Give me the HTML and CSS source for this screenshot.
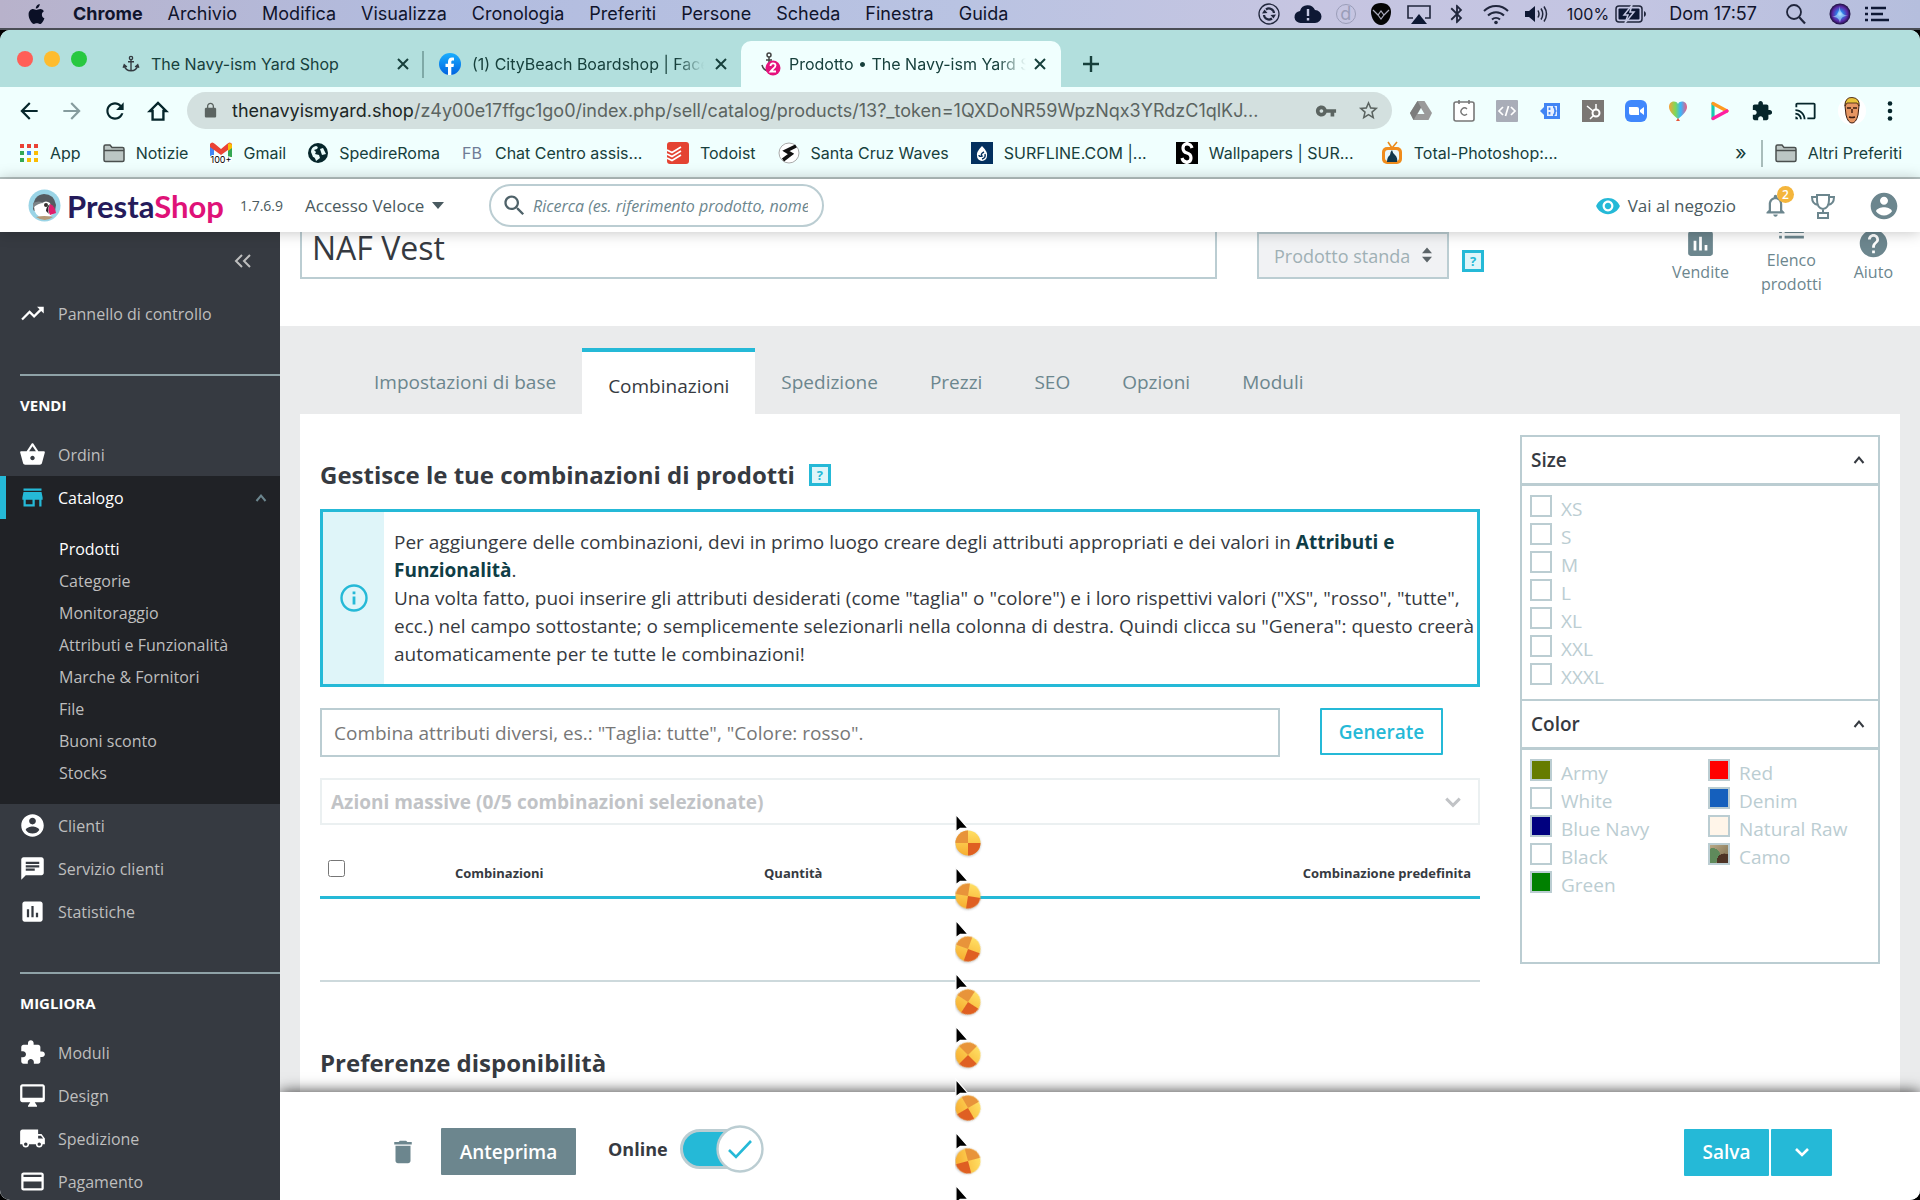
FILE: index.html
```html
<!DOCTYPE html>
<html lang="it">
<head>
<meta charset="utf-8">
<title>Prodotto • The Navy-ism Yard Shop</title>
<link rel="stylesheet" href="styles.css">
</head>
<body>
<svg class="defs" aria-hidden="true">
  <defs>
    <linearGradient id="ballLight" x1="0" y1="0" x2="0" y2="1"><stop offset="0" stop-color="#ffdf63"/><stop offset="1" stop-color="#f7ae30"/></linearGradient>
    <linearGradient id="fbBlue" x1="0" y1="0" x2="0" y2="1"><stop offset="0" stop-color="#19aefe"/><stop offset="1" stop-color="#0163e0"/></linearGradient>
    <radialGradient id="siri"><stop offset="0" stop-color="#bfe6ff"/><stop offset=".3" stop-color="#2d7fe8"/><stop offset=".7" stop-color="#5b2aa8"/><stop offset="1" stop-color="#1b0f3c"/></radialGradient>
    <linearGradient id="rainbow" x1="0" y1="0" x2="1" y2="0"><stop offset="0" stop-color="#f9a13a"/><stop offset=".35" stop-color="#7ed957"/><stop offset=".65" stop-color="#38b6ff"/><stop offset="1" stop-color="#f05a7e"/></linearGradient>
  </defs>
  <symbol id="i-anchor" viewBox="0 0 24 24"><g fill="none" stroke="#333a40" stroke-width="1.800"><circle cx="12" cy="4" r="2.200"/><path d="M12 6v15M8 9h8M3 14c1 5 5 7 9 7s8-2 9-7M1.500 17l1.500-4 3.500 3M22.500 17l-1.500-4-3.500 3"/></g></symbol>
  <symbol id="i-x" viewBox="0 0 12 12"><path d="M1 1l10 10M11 1L1 11" stroke="currentColor" stroke-width="2" fill="none"/></symbol>
  <symbol id="i-folder" viewBox="0 0 22 20"><path d="M1 17V3.500C1 2.500 1.500 2 2.500 2H7l2 2.500h10.500c1 0 1.500.5 1.500 1.500V17c0 1-.5 1.500-1.500 1.500h-17C1.500 18.500 1 18 1 17z" fill="#bcc6c4" stroke="#4a4f4e" stroke-width="1.500"/><path d="M1 7.500h20" stroke="#4a4f4e" stroke-width="1.300"/></symbol>
  <symbol id="i-user" viewBox="0 0 24 24"><path d="M12 2C6.480 2 2 6.480 2 12s4.480 10 10 10 10-4.480 10-10S17.520 2 12 2zm0 3c1.660 0 3 1.340 3 3s-1.340 3-3 3-3-1.340-3-3 1.340-3 3-3zm0 14.200c-2.500 0-4.710-1.280-6-3.220.03-1.990 4-3.080 6-3.080 1.990 0 5.970 1.090 6 3.080-1.290 1.940-3.500 3.220-6 3.220z"/></symbol>
  <symbol id="i-stats" viewBox="0 0 24 24"><path d="M19 3H5c-1.100 0-2 .9-2 2v14c0 1.100.9 2 2 2h14c1.100 0 2-.9 2-2V5c0-1.100-.9-2-2-2zM9 17H7v-7h2v7zm4 0h-2V7h2v10zm4 0h-2v-4h2v4z"/></symbol>
  <symbol id="i-puzzle" viewBox="0 0 24 24"><path d="M20.500 11H19V7c0-1.100-.9-2-2-2h-4V3.500C13 2.120 11.880 1 10.500 1S8 2.120 8 3.500V5H4c-1.100 0-1.990.9-1.990 2v3.800H3.500c1.490 0 2.700 1.210 2.700 2.700s-1.210 2.700-2.700 2.700H2V20c0 1.100.9 2 2 2h3.800v-1.500c0-1.490 1.210-2.700 2.700-2.700 1.490 0 2.700 1.210 2.700 2.700V22H17c1.100 0 2-.9 2-2v-4h1.500c1.380 0 2.500-1.120 2.500-2.500S21.880 11 20.500 11z"/></symbol>
  <symbol id="i-search" viewBox="0 0 24 24"><path d="M15.500 14h-.79l-.28-.27C15.410 12.590 16 11.110 16 9.500 16 5.910 13.090 3 9.500 3S3 5.910 3 9.500 5.910 16 9.500 16c1.610 0 3.090-.59 4.230-1.570l.27.28v.79l5 4.990L20.490 19l-4.990-5zm-6 0C7.010 14 5 11.990 5 9.500S7.010 5 9.500 5 14 7.010 14 9.500 11.990 14 9.500 14z"/></symbol>
  <symbol id="i-up" viewBox="0 0 12 12"><path d="M1.500 9L6 3.500 10.500 9" fill="none" stroke="currentColor" stroke-width="2"/></symbol>
  <symbol id="i-down" viewBox="0 0 16 12"><path d="M2 3l6 6 6-6" fill="none" stroke="currentColor" stroke-width="2.600"/></symbol>
  <symbol id="i-arrow" viewBox="0 0 16 24"><path d="M1 1v20l5-4h9z" fill="#000" stroke="#fff" stroke-width="1.500"/></symbol>
  <symbol id="i-ball" viewBox="0 0 26 26"><circle cx="13" cy="13" r="12.500" fill="url(#ballLight)"/><path d="M13 13L.5 13A12.500 12.500 0 0 1 13 .5z" fill="#e8943a"/><path d="M13 13h12.500A12.500 12.500 0 0 1 13 25.500z" fill="#df5f22"/></symbol>
</svg>

<header class="menubar">
  <nav class="menus" aria-label="Menu">
    <svg class="apple" viewBox="0 0 17 21"><path fill="#0b1026" d="M11.700 0c.1 1.200-.4 2.400-1.100 3.200-.7.900-1.800 1.500-2.800 1.400-.1-1.100.4-2.300 1.100-3.100C9.600.7 10.800.1 11.700 0zM15.900 7.300c-1.300.8-2 1.900-2 3.400 0 1.700 1 3 2.500 3.600-.4 1.300-1 2.500-1.800 3.600-.8 1.100-1.600 2.100-2.800 2.100-1.100 0-1.500-.7-2.900-.7s-1.900.7-3 .7c-1.200 0-2.100-1.100-2.900-2.300C1.400 15.400.5 12.700.6 10.300c.1-3.100 2.100-5.200 4.400-5.200 1.400 0 2.500.9 3.400.9.800 0 2.200-1 3.900-1 1.400.1 2.700.7 3.600 2.300z"/></svg>
    <b>Chrome</b><span>Archivio</span><span>Modifica</span><span>Visualizza</span><span>Cronologia</span><span>Preferiti</span><span>Persone</span><span>Scheda</span><span>Finestra</span><span>Guida</span>
  </nav>
  <div class="status">
    <svg width="22" height="22" viewBox="0 0 22 22"><circle cx="11" cy="11" r="10" fill="none" stroke="#20263c" stroke-width="1.300"/><path d="M6 12a5 5 0 0 0 8 3.500M16 10a5 5 0 0 0-8-3.500" fill="none" stroke="#20263c" stroke-width="2.200"/><path d="M4 10.500l2.500-4 3 3.500zM18 11.500l-2.500 4-3-3.500z" fill="#20263c"/></svg>
    <svg width="28" height="22" viewBox="0 0 28 22"><path d="M7 20a6 6 0 0 1-1-12A8 8 0 0 1 21 7a6.500 6.500 0 0 1 0 13z" fill="#0e1834"/><path d="M14 6v7M14 15v2.500" stroke="#c5c8e2" stroke-width="2.400"/></svg>
    <span class="ring">d</span>
    <svg width="22" height="22" viewBox="0 0 22 22"><path d="M11 0C4 0 1 4 1 9c0 6 4 13 10 13s10-7 10-13c0-5-3-9-10-9z" fill="#050505"/><path d="M3 7l5 5 3-4 3 4 5-5M8 12l3 4 3-4" fill="none" stroke="#aab" stroke-width="1.200"/></svg>
    <svg width="26" height="22" viewBox="0 0 26 22"><path d="M7 15H2V3h22v12h-5" fill="none" stroke="#20263c" stroke-width="1.600"/><path d="M13 11l8 10H5z" fill="#0e1834"/></svg>
    <svg width="22" height="24" viewBox="0 0 24 24"><path fill="#20263c" d="M17.710 7.710L12 2h-1v7.590L6.410 5 5 6.410 10.590 12 5 17.590 6.410 19 11 14.410V22h1l5.710-5.710-4.300-4.290 4.300-4.290zM13 5.830l1.880 1.880L13 9.590V5.830zm1.880 10.460L13 18.170v-3.760l1.880 1.880z"/></svg>
    <svg width="28" height="22" viewBox="0 0 28 22"><g fill="none" stroke="#20263c" stroke-width="2"><path d="M2 8a17 17 0 0 1 24 0M6 12.500a11.500 11.500 0 0 1 16 0M10 16.500a6 6 0 0 1 8 0"/></g><circle cx="14" cy="19.500" r="1.800" fill="#20263c"/></svg>
    <svg width="24" height="20" viewBox="0 0 24 20"><path d="M1 7h4l6-5v16l-6-5H1z" fill="#0e1834"/><path d="M14 6.500q2 3.500 0 7M17 4.500q3.500 5.500 0 11M20 2.500q5 7.500 0 15" fill="none" stroke="#20263c" stroke-width="1.500"/></svg>
    <span class="pct">100%</span>
    <svg width="32" height="18" viewBox="0 0 32 18"><rect x="1" y="1" width="26" height="16" rx="3" fill="none" stroke="#20263c" stroke-width="1.500"/><rect x="3.500" y="3.500" width="21" height="11" rx="1" fill="#0e1834"/><path d="M29 6v6q2-1 2-3t-2-3z" fill="#20263c"/><path d="M17 0l-8 10h4l-3 8 9-11h-4z" fill="#0e1834" stroke="#c5c8e2" stroke-width="1.500"/></svg>
    <span class="clock">Dom 17:57</span>
    <svg class="find" width="22" height="22" viewBox="0 0 22 22"><circle cx="9" cy="9" r="7" fill="none" stroke="#20263c" stroke-width="1.800"/><path d="M14 14l6 6.500" stroke="#20263c" stroke-width="2.200"/></svg>
    <svg width="22" height="22" viewBox="0 0 22 22"><circle cx="11" cy="11" r="10.500" fill="url(#siri)"/><path d="M3 14c5-1 7-4 7.500-11 .5 6 3 9 8.500 10-5 0-7 1-8 7-1-5-3-6-8-6z" fill="#b7e6ff" opacity=".6"/></svg>
    <svg width="24" height="18" viewBox="0 0 24 18"><path d="M0 3h3M0 9h3M0 15h3M6 3h15M6 9h12M6 15h18" stroke="#0e1834" stroke-width="2.600"/></svg>
  </div>
</header>

<div class="window">
  <div class="tabstrip">
    <div class="lights"><i class="red"></i><i class="amber"></i><i class="green"></i></div>
    <div class="tab first">
      <svg width="18" height="20"><use href="#i-anchor"/></svg>
      <span class="tab-title">The Navy-ism Yard Shop</span>
      <button aria-label="Chiudi scheda"><svg width="12" height="12"><use href="#i-x"/></svg></button>
    </div>
    <div class="tab second">
      <svg width="22" height="22" viewBox="0 0 22 22"><circle cx="11" cy="11" r="11" fill="url(#fbBlue)"/><path d="M9 22v-8H6.500v-3.200H9V8.700C9 6 10.600 4.500 13 4.500c1.100 0 2 .2 2 .2v2.700h-1.200c-1.200 0-1.500.7-1.500 1.500v1.900H15l-.5 3.200h-2.200v8z" fill="#fff"/></svg>
      <span class="tab-title fade">(1) CityBeach Boardshop | Facebook</span>
      <button aria-label="Chiudi scheda"><svg width="12" height="12"><use href="#i-x"/></svg></button>
    </div>
    <div class="tab active">
      <svg width="20" height="24" viewBox="0 0 20 24"><g fill="none" stroke="#444" stroke-width="1.500"><circle cx="8" cy="3" r="2"/><path d="M8 5v13M5 8h6M1 13c1 4 4 6 7 6"/></g><circle cx="12" cy="16" r="7.500" fill="#e5127d"/><path d="M9.500 14c0-3.500 5-3.500 5-.5 0 2-3 3.500-5 6h5.500" fill="none" stroke="#fff" stroke-width="1.800"/></svg>
      <span class="tab-title fade">Prodotto • The Navy-ism Yard Shop</span>
      <button aria-label="Chiudi scheda"><svg width="12" height="12"><use href="#i-x"/></svg></button>
    </div>
    <button class="newtab" aria-label="Nuova scheda"><svg width="18" height="18" viewBox="0 0 18 18"><path d="M9 1v16M1 9h16" stroke="currentColor" stroke-width="2.400"/></svg></button>
  </div>

  <div class="toolbar">
    <div class="navbtns">
      <button aria-label="Indietro"><svg width="26" height="26" viewBox="0 0 24 24"><path d="M20 11H7.830l5.590-5.590L12 4l-8 8 8 8 1.410-1.410L7.830 13H20v-2z"/></svg></button>
      <button class="dim" aria-label="Avanti"><svg width="26" height="26" viewBox="0 0 24 24"><path d="M4 11h12.170l-5.590-5.590L12 4l8 8-8 8-1.410-1.410L16.170 13H4v-2z"/></svg></button>
      <button aria-label="Ricarica"><svg width="26" height="26" viewBox="0 0 24 24"><path d="M17.650 6.350C16.200 4.900 14.210 4 12 4c-4.420 0-7.990 3.580-7.990 8s3.570 8 7.990 8c3.730 0 6.840-2.550 7.730-6h-2.080c-.82 2.330-3.040 4-5.650 4-3.310 0-6-2.690-6-6s2.690-6 6-6c1.660 0 3.140.69 4.220 1.780L13 11h7V4l-2.350 2.350z"/></svg></button>
      <button aria-label="Pagina iniziale"><svg width="26" height="26" viewBox="0 0 24 24"><path d="M7 20v-8H4.500L12 4.500l7.500 7.500H17v8z" fill="none" stroke="currentColor" stroke-width="2.200"/></svg></button>
    </div>
    <div class="omnibox">
      <svg width="17" height="17" viewBox="0 0 24 24"><path fill="#5b6461" d="M18 8h-1V6c0-2.760-2.240-5-5-5S7 3.240 7 6v2H6c-1.100 0-2 .9-2 2v10c0 1.100.9 2 2 2h12c1.100 0 2-.9 2-2V10c0-1.100-.9-2-2-2zM8.900 8V6c0-1.710 1.390-3.100 3.100-3.100s3.100 1.390 3.100 3.100v2z"/></svg>
      <span class="url"><span class="host">thenavyismyard.shop</span>/z4y00e17ffgc1go0/index.php/sell/catalog/products/13?_token=1QXDoNR59WpzNqx3YRdzC1qlKJ...</span>
      <svg width="22" height="22" viewBox="0 0 24 24"><path fill="#5b6461" d="M12.650 10C11.830 7.670 9.610 6 7 6c-3.310 0-6 2.690-6 6s2.690 6 6 6c2.610 0 4.830-1.670 5.650-4H17v4h4v-4h2v-4H12.650zM7 14c-1.100 0-2-.9-2-2s.9-2 2-2 2 .9 2 2-.9 2-2 2z"/></svg>
      <svg width="23" height="23" viewBox="0 0 24 24"><path fill="#5b6461" d="M22 9.240l-7.190-.62L12 2 9.190 8.630 2 9.240l5.460 4.730L5.820 21 12 17.270 18.180 21l-1.630-7.030L22 9.240zM12 15.400l-3.760 2.270 1-4.280-3.320-2.880 4.380-.38L12 6.100l1.710 4.040 4.380.38-3.320 2.880 1 4.280L12 15.400z"/></svg>
    </div>
    <div class="exts">
      <svg width="22" height="20" viewBox="0 0 22 20"><path d="M7.500 0h7L22 12l-3.500 7h-15L0 12z" fill="#9a9a9a"/><path d="M7.500 0L0 12l3.500 7L11 6.500z" fill="#7c7c7c"/><path d="M11 7l-3.500 6h7z" fill="#f0fffe"/></svg>
      <svg width="22" height="22" viewBox="0 0 22 22"><rect x="1" y="2" width="20" height="19" rx="2" fill="#fff" stroke="#777" stroke-width="1.600"/><path d="M6 0v4M16 0v4" stroke="#777" stroke-width="1.600"/><path d="M14 9a3.500 3.500 0 1 0 0 5" fill="none" stroke="#777" stroke-width="1.400"/></svg>
      <svg width="22" height="22" viewBox="0 0 22 22"><rect width="22" height="22" rx="1" fill="#a9adb8"/><path d="M7 7l-4 4 4 4M15 7l4 4-4 4M12.500 6l-3 10" fill="none" stroke="#fff" stroke-width="1.700"/></svg>
      <svg width="22" height="18" viewBox="0 0 22 18"><path d="M5 1h16v16H5v-4L1 9l4-4z" fill="#4285f4"/><path d="M8 4h10v10H8z" fill="#e8f0fe"/><path d="M10.500 5.500v2.500M10.500 10v2.500M14 5c3 0 1 3 2.500 4C15 10 17 13 14 13" fill="none" stroke="#4285f4" stroke-width="1.800"/></svg>
      <svg width="22" height="22" viewBox="0 0 22 22"><rect width="22" height="22" fill="#7b7774"/><g fill="none" stroke="#fff"><circle cx="14" cy="13" r="3.500" stroke-width="2"/><path d="M14 9V4M11 11L5 6M11.500 15.500L8 19" stroke-width="1.500"/></g></svg>
      <svg width="22" height="22" viewBox="0 0 22 22"><rect width="22" height="22" rx="6" fill="#4087fc"/><path d="M4 7h8q2 0 2 2v6H6q-2 0-2-2zM15 10l4-3v8l-4-3z" fill="#fff"/></svg>
      <svg width="20" height="22" viewBox="0 0 20 22"><path d="M10 19C5 15 1 11 1 7c0-6 7-7 9-3 2-4 9-3 9 3 0 4-4 8-9 12z" fill="url(#rainbow)"/><path d="M10 18l-2 3h4z" fill="#e8553a"/></svg>
      <svg width="20" height="20" viewBox="0 0 20 20"><g fill="none" stroke-width="3.200" stroke-linecap="round"><path d="M3 17.500V2.500" stroke="#19c8b0"/><path d="M3 2.500L17 10" stroke="#ff9a1f"/><path d="M17 10L3 17.500" stroke="#ff1fa0"/></g></svg>
      <svg class="ink" width="22" height="22"><use href="#i-puzzle"/></svg>
      <svg class="ink" width="23" height="22" viewBox="0 0 24 24"><path d="M21 3H3c-1.100 0-2 .9-2 2v3h2V5h18v14h-7v2h7c1.100 0 2-.9 2-2V5c0-1.100-.9-2-2-2zM1 18v3h3c0-1.660-1.340-3-3-3zm0-4v2c2.760 0 5 2.240 5 5h2c0-3.870-3.130-7-7-7zm0-4v2c4.970 0 9 4.030 9 9h2c0-6.080-4.930-11-11-11z"/></svg>
      <svg width="28" height="28" viewBox="0 0 28 28"><circle cx="14" cy="14" r="14" fill="#fff"/><path d="M7 9q0-8 7-8t7 8l-1 9q-2 8-6 8t-6-8z" fill="#e79663" stroke="#3b1c10"/><path d="M7 9q0-9 7-8.500Q22 1 21 9l-2-3H9z" fill="#e8c33a" stroke="#3b1c10" stroke-width=".8"/><path d="M9 11h4M15 11h4M14 12v4M11 20q3 1 6 0" stroke="#3b1c10" stroke-width="1.400" fill="none"/></svg>
      <svg class="ink" width="6" height="20" viewBox="0 0 6 20"><circle cx="3" cy="2.500" r="2.300"/><circle cx="3" cy="10" r="2.300"/><circle cx="3" cy="17.500" r="2.300"/></svg>
    </div>
  </div>

  <div class="bookmarks">
    <a href="#"><svg width="20" height="20" viewBox="0 0 20 20"><path fill="#ea4335" d="M1 1h4v4H1zM8 1h4v4H8zM15 1h4v4h-4z"/><path fill="#34a853" d="M1 8h4v4H1zM1 15h4v4H1z"/><path fill="#4285f4" d="M8 8h4v4H8z"/><path fill="#fbbc04" d="M15 8h4v4h-4zM8 15h4v4H8zM15 15h4v4h-4z"/></svg><span>App</span></a>
    <a href="#"><svg width="22" height="20"><use href="#i-folder"/></svg><span>Notizie</span></a>
    <a href="#"><svg width="22" height="22" viewBox="0 0 22 22"><path d="M0 2h4v13H0z" fill="#4285f4"/><path d="M18 2h4v13h-4z" fill="#34a853"/><path d="M0 2q2-3 5 0l6 5 6-5q3-3 5 0v3L11 13 0 5z" fill="#ea4335"/><path d="M18 2q3-2 4 1v3l-4 3z" fill="#fbbc04"/><text x="11" y="21" text-anchor="middle" font-family="Inter" font-size="9" fill="#000" stroke="#fff" stroke-width="2" paint-order="stroke">100+</text></svg><span>Gmail</span></a>
    <a href="#"><svg width="20" height="20" viewBox="0 0 20 20"><circle cx="10" cy="10" r="10" fill="#06262b"/><path d="M3 9q0-5 5-6 3 1 1 3l-3 1 2 2-1 2 4 1 1 3-4 3q-1-4-3-4zM12 6l3-1 3 6-4 1z" fill="#e9fbfa"/></svg><span>SpedireRoma</span></a>
    <a href="#"><span class="fb">FB</span><span class="cut">Chat Centro assis...</span></a>
    <a href="#"><svg width="22" height="22" viewBox="0 0 22 22"><rect width="22" height="22" rx="3" fill="#e44332"/><path d="M0 8l5 2.500L14 5M0 12l5 2.500L14 9M0 16l5 2.500L14 13" fill="none" stroke="#fff" stroke-width="1.600"/></svg><span>Todoist</span></a>
    <a href="#"><svg width="22" height="22" viewBox="0 0 22 22"><circle cx="11" cy="11" r="10" fill="#fff" stroke="#aaa"/><path d="M18 4L8 9l5 3-8 6" fill="none" stroke="#111" stroke-width="3.600"/></svg><span>Santa Cruz Waves</span></a>
    <a href="#"><svg width="22" height="22" viewBox="0 0 22 22"><path d="M0 0h22v22H0z" fill="#03305f"/><path d="M11 4q6 6 5 10a5 5 0 0 1-10 0q-1-4 5-10z" fill="#fff"/><path d="M13 10q-4 2-2 4-3 1-3-1M14 12q1 4-3 5" fill="none" stroke="#03305f" stroke-width="1.400"/></svg><span class="cut">SURFLINE.COM |...</span></a>
    <a href="#"><svg width="22" height="22" viewBox="0 0 22 22"><path d="M0 0h22v22H0z" fill="#000"/><path d="M16 6q-1-4-5-4t-4 4 4 5 4 5-4 4-5-4M11 0v3M11 19v3" fill="none" stroke="#fff" stroke-width="3.200"/></svg><span class="cut">Wallpapers | SUR...</span></a>
    <a href="#"><svg width="22" height="24" viewBox="0 0 22 24"><path d="M11 7L7 1M11 7l5-6" stroke="#e98a1a" stroke-width="1.600"/><rect x="1" y="6" width="20" height="17" rx="5" fill="#f08c1c"/><rect x="4" y="9" width="14" height="11" rx="3" fill="#e9f7fb"/><path d="M6 21q0-5 3-7 0-3 2-5 1 4 3 5 3 3 2 7z" fill="#12384c"/></svg><span class="cut">Total-Photoshop:...</span></a>
    <span class="more">»</span>
    <a class="others" href="#"><svg width="22" height="20"><use href="#i-folder"/></svg><span>Altri Preferiti</span></a>
  </div>

  <header class="ps-header">
    <a class="brand" href="#">
      <svg width="33" height="33" viewBox="0 0 33 33"><circle cx="16.500" cy="16.500" r="16" fill="#9ad4e6"/><path d="M5 20Q5 6 16 5q10 0 12 11l-1 6H6z" fill="#555b60"/><path d="M6 17q3-4 8-3 4-3 8 0l3 11q-4 4-10 4Q6 27 6 17z" fill="#fff"/><path d="M5 14q6-3 11 0-6 0-11 5z" fill="#7c8488"/><circle cx="18" cy="16" r="2" fill="#34302f"/><path d="M22 15q5 2 6 9l-6 2q-3-5 0-11z" fill="#df1f6d"/><path d="M22 15q-3 5-1 10l-3-3q0-4 4-7z" fill="#29242a"/><path d="M8 28q8-2 17 0-8 6-17 0z" fill="#b69a78"/></svg>
      <span class="wordmark">Presta<span>Shop</span></span>
    </a>
    <span class="version">1.7.6.9</span>
    <button class="quick">Accesso Veloce<i class="caret"></i></button>
    <label class="search"><svg width="27" height="27"><use href="#i-search"/></svg><input type="text" aria-label="Ricerca" placeholder="Ricerca (es. riferimento prodotto, nome cliente...)"></label>
    <div class="ps-right">
      <a class="shop" href="#"><svg width="26" height="26" viewBox="0 0 24 24"><path d="M12 4.500C7 4.500 2.730 7.610 1 12c1.730 4.390 6 7.500 11 7.500s9.270-3.110 11-7.500c-1.730-4.390-6-7.500-11-7.500zM12 17c-2.760 0-5-2.240-5-5s2.240-5 5-5 5 2.240 5 5-2.240 5-5 5zm0-8c-1.660 0-3 1.340-3 3s1.340 3 3 3 3-1.340 3-3-1.340-3-3-3z"/></svg>Vai al negozio</a>
      <button class="bell" aria-label="Notifiche"><svg width="27" height="27" viewBox="0 0 24 24"><path d="M12 22c1.100 0 2-.9 2-2h-4c0 1.100.9 2 2 2zm6-6v-5c0-3.070-1.640-5.640-4.500-6.320V4c0-.83-.67-1.500-1.500-1.500s-1.500.67-1.500 1.500v.68C7.630 5.360 6 7.920 6 11v5l-2 2v1h16v-1l-2-2zm-2 1H8v-6c0-2.480 1.510-4.500 4-4.500s4 2.020 4 4.500v6z"/></svg><span class="badge">2</span></button>
      <button aria-label="Premi"><svg width="26" height="26" viewBox="0 0 26 26"><g fill="none" stroke="#6c868e" stroke-width="2"><path d="M7 2h12v5q0 8-6 9-6-1-6-9zM7 4H2q0 7 6 8M19 4h5q0 7-6 8M13 16v4M8 20h10v5H8z"/></g></svg></button>
      <button class="account" aria-label="Profilo"><svg width="32" height="32"><use href="#i-user"/></svg></button>
    </div>
  </header>

  <div class="workspace">
    <nav class="sidebar" aria-label="Principale">
      <button class="collapse" aria-label="Riduci menu"><svg width="18" height="14" viewBox="0 0 18 14"><path d="M8 1L2 7l6 6M16 1l-6 6 6 6" fill="none" stroke="#bebebe" stroke-width="2"/></svg></button>
      <a class="item" href="#"><svg viewBox="0 0 24 24"><path d="M16 6l2.290 2.290-4.880 4.880-4-4L2 16.590 3.410 18l6-6 4 4 6.300-6.290L22 12V6z"/></svg>Pannello di controllo</a>
      <h2>VENDI</h2>
      <a class="item" href="#"><svg viewBox="0 0 24 24"><path d="M17.210 9l-4.380-6.560c-.19-.28-.51-.42-.83-.42-.32 0-.64.14-.83.43L6.790 9H2c-.55 0-1 .45-1 1 0 .09.01.18.04.27l2.540 9.270c.23.84 1 1.460 1.920 1.460h13c.92 0 1.690-.62 1.930-1.460l2.540-9.270L23 10c0-.55-.45-1-1-1h-4.790zM9 9l3-4.400L15 9H9zm3 8c-1.100 0-2-.9-2-2s.9-2 2-2 2 .9 2 2-.9 2-2 2z"/></svg>Ordini</a>
      <div class="open">
        <a class="item current" href="#"><svg viewBox="0 0 24 24"><path d="M20 4H4v2h16V4zm1 10v-2l-1-5H4l-1 5v2h1v6h10v-6h4v6h2v-6h1zm-9 4H6v-4h6v4z"/></svg>Catalogo<svg class="chev"><use href="#i-up"/></svg></a>
        <ul>
          <li><a class="on" href="#">Prodotti</a></li><li><a href="#">Categorie</a></li><li><a href="#">Monitoraggio</a></li><li><a href="#">Attributi e Funzionalità</a></li><li><a href="#">Marche &amp; Fornitori</a></li><li><a href="#">File</a></li><li><a href="#">Buoni sconto</a></li><li><a href="#">Stocks</a></li>
        </ul>
      </div>
      <a class="item" href="#"><svg><use href="#i-user"/></svg>Clienti</a>
      <a class="item" href="#"><svg viewBox="0 0 24 24"><path d="M20 2H4c-1.100 0-1.990.9-1.990 2L2 22l4-4h14c1.100 0 2-.9 2-2V4c0-1.100-.9-2-2-2zM6 9h12v2H6V9zm8 5H6v-2h8v2zm4-6H6V6h12v2z"/></svg>Servizio clienti</a>
      <a class="item" href="#"><svg><use href="#i-stats"/></svg>Statistiche</a>
      <h2>MIGLIORA</h2>
      <a class="item" href="#"><svg><use href="#i-puzzle"/></svg>Moduli</a>
      <a class="item" href="#"><svg viewBox="0 0 24 24"><path d="M21 2H3c-1.100 0-2 .9-2 2v12c0 1.100.9 2 2 2h7l-2 3v1h8v-1l-2-3h7c1.100 0 2-.9 2-2V4c0-1.100-.9-2-2-2zm0 12H3V4h18v10z"/></svg>Design</a>
      <a class="item" href="#"><svg viewBox="0 0 24 24"><path d="M20 8h-3V4H3c-1.100 0-2 .9-2 2v11h2c0 1.660 1.340 3 3 3s3-1.340 3-3h6c0 1.660 1.340 3 3 3s3-1.340 3-3h2v-5l-3-4zM6 18.500c-.83 0-1.500-.67-1.500-1.500s.67-1.500 1.500-1.500 1.500.67 1.500 1.500-.67 1.500-1.500 1.500zm13.500-9l1.960 2.500H17V9.500h2.500zm-1.500 9c-.83 0-1.500-.67-1.500-1.500s.67-1.500 1.500-1.500 1.500.67 1.500 1.500-.67 1.500-1.500 1.500z"/></svg>Spedizione</a>
      <a class="item" href="#"><svg viewBox="0 0 24 24"><path d="M20 4H4c-1.110 0-1.990.89-1.990 2L2 18c0 1.110.89 2 2 2h16c1.110 0 2-.89 2-2V6c0-1.110-.89-2-2-2zm0 14H4v-6h16v6zm0-10H4V6h16v2z"/></svg>Pagamento</a>
    </nav>

    <div class="main">
      <div class="content">
        <div class="product-head">
          <input class="name" aria-label="Nome prodotto" value="NAF Vest">
          <div class="type"><select disabled aria-label="Tipo di prodotto"><option>Prodotto standard</option></select><svg width="10" height="16" viewBox="0 0 12 18"><path d="M0 7l6-7 6 7zM0 11h12l-6 7z" fill="#5c6468"/></svg></div>
          <button class="help">?</button>
          <div class="actions">
            <a href="#"><svg width="33" height="33"><use href="#i-stats"/></svg>Vendite</a>
            <a class="two" href="#"><svg width="33" height="33" viewBox="0 0 24 24"><path d="M3 7h2v2H3zM7 7h14v2H7zM3 11h2v2H3zM7 11h14v2H7zM3 15h2v2H3zM7 15h14v2H7z"/></svg>Elenco<br>prodotti</a>
            <a href="#"><svg width="33" height="33" viewBox="0 0 24 24"><path d="M12 2C6.480 2 2 6.480 2 12s4.480 10 10 10 10-4.480 10-10S17.520 2 12 2zm1 17h-2v-2h2v2zm2.070-7.750l-.9.92C13.450 12.900 13 13.500 13 15h-2v-.5c0-1.100.45-2.100 1.170-2.830l1.240-1.260c.37-.36.59-.86.59-1.410 0-1.100-.9-2-2-2s-2 .9-2 2H8c0-2.210 1.790-4 4-4s4 1.790 4 4c0 .88-.36 1.680-.93 2.250z"/></svg>Aiuto</a>
          </div>
        </div>
        <nav class="tabs" aria-label="Sezioni prodotto">
          <a href="#">Impostazioni di base</a><a class="sel" href="#">Combinazioni</a><a href="#">Spedizione</a><a href="#">Prezzi</a><a href="#">SEO</a><a href="#">Opzioni</a><a href="#">Moduli</a>
        </nav>
        <div class="panel">
          <section class="combos">
            <h1>Gestisce le tue combinazioni di prodotti <button class="help">?</button></h1>
            <div class="info">
              <div class="info-icon"><svg width="28" height="28" viewBox="0 0 28 28"><circle cx="14" cy="14" r="12.500" fill="none" stroke="#25b9d7" stroke-width="2.400"/><path d="M14 7.500v2.800M14 12.500v8" stroke="#25b9d7" stroke-width="2.800"/></svg></div>
              <p>Per aggiungere delle combinazioni, devi in primo luogo creare degli attributi appropriati e dei valori in <a href="#">Attributi e<br>Funzionalità</a>.<br>Una volta fatto, puoi inserire gli attributi desiderati (come "taglia" o "colore") e i loro rispettivi valori ("XS", "rosso", "tutte",<br>ecc.) nel campo sottostante; o semplicemente selezionarli nella colonna di destra. Quindi clicca su "Genera": questo creerà<br>automaticamente per te tutte le combinazioni!</p>
            </div>
            <div class="generate">
              <input aria-label="Combina attributi" placeholder="Combina attributi diversi, es.: &quot;Taglia: tutte&quot;, &quot;Colore: rosso&quot;.">
              <div><button>Generate</button></div>
            </div>
            <button class="bulk" disabled>Azioni massive (0/5 combinazioni selezionate)<svg width="18" height="14"><use href="#i-down"/></svg></button>
            <table>
              <thead><tr><th class="c-check"><input type="checkbox" aria-label="Seleziona tutto"></th><th class="c-name">Combinazioni</th><th>Quantità</th><th class="c-def">Combinazione predefinita</th></tr></thead>
              <tbody><tr><td colspan="4"></td></tr></tbody>
            </table>
            <h1 class="prefs">Preferenze disponibilità</h1>
          </section>
          <aside class="attrs">
            <button class="group">Size<svg width="12" height="12"><use href="#i-up"/></svg></button>
            <div class="opts sizes">
              <label><input type="checkbox">XS</label><label><input type="checkbox">S</label><label><input type="checkbox">M</label><label><input type="checkbox">L</label><label><input type="checkbox">XL</label><label><input type="checkbox">XXL</label><label><input type="checkbox">XXXL</label>
            </div>
            <button class="group">Color<svg width="12" height="12"><use href="#i-up"/></svg></button>
            <div class="opts colors">
              <label><input type="checkbox" class="army">Army</label><label><input type="checkbox">White</label><label><input type="checkbox" class="navy">Blue Navy</label><label><input type="checkbox">Black</label><label><input type="checkbox" class="grn">Green</label><label><input type="checkbox" class="rd">Red</label><label><input type="checkbox" class="denim">Denim</label><label><input type="checkbox" class="raw">Natural Raw</label><label><input type="checkbox" class="camo">Camo</label>
            </div>
          </aside>
        </div>
      </div>
      <footer class="actionbar">
        <button class="trash" aria-label="Elimina"><svg width="30" height="30" viewBox="0 0 24 24"><path d="M6 19c0 1.100.9 2 2 2h8c1.100 0 2-.9 2-2V7H6v12zM19 4h-3.500l-1-1h-5l-1 1H5v2h14V4z"/></svg></button>
        <button class="preview">Anteprima</button>
        <label class="online">Online<span class="switch"><input type="checkbox" checked><svg width="48" height="48" viewBox="0 0 48 48"><circle cx="24" cy="24" r="22.500" fill="#fff" stroke="#bbcdd2" stroke-width="2.400"/><path d="M13 25l7 7 15-16" fill="none" stroke="#25b9d7" stroke-width="2.600"/></svg></span></label>
        <div class="save"><button>Salva</button><button class="drop" aria-label="Altre azioni"><svg width="16" height="12"><use href="#i-down"/></svg></button></div>
      </footer>
    </div>
  </div>
</div>

<div class="trail" aria-hidden="true">
  <div><svg class="ptr"><use href="#i-arrow"/></svg><svg class="ball"><use href="#i-ball"/></svg></div>
  <div><svg class="ptr"><use href="#i-arrow"/></svg><svg class="ball b1"><use href="#i-ball"/></svg></div>
  <div><svg class="ptr"><use href="#i-arrow"/></svg><svg class="ball b2"><use href="#i-ball"/></svg></div>
  <div><svg class="ptr"><use href="#i-arrow"/></svg><svg class="ball b3"><use href="#i-ball"/></svg></div>
  <div><svg class="ptr"><use href="#i-arrow"/></svg><svg class="ball b4"><use href="#i-ball"/></svg></div>
  <div><svg class="ptr"><use href="#i-arrow"/></svg><svg class="ball b5"><use href="#i-ball"/></svg></div>
  <div><svg class="ptr"><use href="#i-arrow"/></svg><svg class="ball b6"><use href="#i-ball"/></svg></div>
  <div><svg class="ptr"><use href="#i-arrow"/></svg></div>
</div>
</body>
</html>
```
FILE: styles.css
```css
*, *::before, *::after { box-sizing: border-box; }

body {
  margin: 0;
  height: 100vh;
  overflow: hidden;
  display: flex;
  flex-direction: column;
  background: #000;
  font-family: "Open Sans", "Noto Sans", sans-serif;
  font-size: 19px;
  color: #363a41;
}

button, input, select { font: inherit; color: inherit; }
button { border: 0; padding: 0; background: none; display: flex; align-items: center; justify-content: center; }
a { color: inherit; text-decoration: none; }
svg { flex: none; display: block; }
h1, h2, p, ul { margin: 0; padding: 0; }
.defs { position: absolute; width: 0; height: 0; }

/* macOS menu bar */
.menubar {
  flex: none;
  height: 30px;
  display: flex;
  justify-content: space-between;
  align-items: center;
  padding: 0 31px 0 28px;
  border-bottom: 2px solid #4a4d55;
  background: linear-gradient(90deg, #b8b2cb, #b2bcdf 22%, #b9c3e2 50%, #c6c5e1 68%, #c3c5e2 85%, #b5bedd);
  font: 18px/28px Inter, sans-serif;
  color: #10142c;
}
.menus { display: flex; align-items: center; gap: 25px; }
.menus b { font-weight: 700; }
.apple { width: 17px; height: 21px; margin-right: 3px; }
.status { display: flex; align-items: center; gap: 14px; }
.status .ring { width: 20px; height: 20px; border: 1px solid #9a9db8; border-radius: 50%; line-height: 17px; text-align: center; color: #9a9db8; }
.status .pct { font-size: 16px; margin: 0 -8px 0 5px; }
.status .clock { margin: 0 14px 0 8px; }
.status .find { margin-right: 8px; }

/* browser window */
.window {
  flex: 1;
  min-height: 0;
  display: flex;
  flex-direction: column;
  overflow: hidden;
  border-radius: 10px;
  background: #f0fffe;
  color: #17403c;
}
.tabstrip {
  flex: none;
  height: 57px;
  display: flex;
  align-items: flex-end;
  background: #b2dfdd;
  font: 16px/20px Inter, sans-serif;
}
.lights { display: flex; gap: 11px; padding: 0 0 20px 17px; width: 113px; }
.lights i { width: 16px; height: 16px; border-radius: 50%; }
.red { background: #ff5f57; }
.amber { background: #febc2e; }
.green { background: #28c840; }
.tab { height: 46px; display: flex; align-items: center; gap: 11px; }
.tab-title { flex: 1; min-width: 0; white-space: nowrap; overflow: hidden; }
.fade { -webkit-mask-image: linear-gradient(90deg, #000 88%, transparent); mask-image: linear-gradient(90deg, #000 88%, transparent); }
.tab.first { width: 311px; padding: 0 15px 0 9px; background: linear-gradient(#7fa9a7, #7fa9a7) right center / 2px 27px no-repeat; }
.tab.second { width: 317px; padding: 0 14px 0 15px; }
.tab.active { width: 320px; padding: 0 15px 0 20px; background: #f0fffe; border-radius: 10px 10px 0 0; gap: 8px; }
.newtab { height: 46px; margin-left: 21px; }

.toolbar { flex: none; height: 47px; display: flex; align-items: center; padding: 0 27px 0 16px; color: #06262b; }
.toolbar button svg, .ink { fill: #06262b; }
.navbtns { display: flex; gap: 17px; width: 171px; }
.navbtns .dim { opacity: .45; }
.omnibox { flex: 1; min-width: 0; height: 37px; border-radius: 19px; background: #d3e0df; display: flex; align-items: center; padding: 0 12px 0 15px; font: 18px/24px Inter, sans-serif; color: #5b6461; }
.url { flex: 1; min-width: 0; white-space: nowrap; overflow: hidden; margin: 0 16px 0 13px; }
.host { color: #1c2726; }
.omnibox svg + svg { margin-left: 20px; }
.exts { width: 483px; margin-left: 18px; display: flex; align-items: center; justify-content: space-between; }

.bookmarks { flex: none; height: 45px; display: flex; align-items: center; gap: 22px; padding: 0 18px 5px 19px; border-bottom: 2px solid #b9c6c5; font: 16px/20px Inter, sans-serif; }
.bookmarks a { display: flex; align-items: center; gap: 11px; white-space: nowrap; }
.bookmarks .cut { width: 150px; }
.fb { width: 22px; color: #6f7c96; }
.more { margin-left: auto; font-size: 20px; }
.bookmarks .others { border-left: 2px solid #a9bdbb; padding-left: 12px; height: 27px; margin-left: -8px; }

/* back-office header */
.ps-header { flex: none; height: 53px; display: flex; align-items: center; padding: 0 20px 0 28px; background: #fff; position: relative; z-index: 2; box-shadow: 0 0 14px rgba(0, 0, 0, .25); color: #4a5a60; font-size: 17px; }
.brand { display: flex; align-items: center; gap: 6px; width: 212px; }
.wordmark { font: 700 31px/36px Lato, sans-serif; color: #251b5b; }
.wordmark span { color: #df1278; }
.version { width: 65px; font-size: 14px; }
.quick { gap: 8px; width: 139px; justify-content: flex-start; white-space: nowrap; }
.caret { border: 6px solid transparent; border-top: 7px solid #4a5a60; border-bottom: 0; }
.search { margin-left: 45px; width: 335px; height: 43px; border: 2px solid #bbcdd2; border-radius: 22px; display: flex; align-items: center; padding: 0 14px 0 10px; gap: 5px; }
.search svg { fill: #4f6269; }
.search input { flex: 1; min-width: 0; border: 0; outline: 0; padding: 0; background: none; font-size: 16px; font-style: italic; }
.search input::placeholder { color: #6c868e; opacity: 1; }
.ps-right { margin-left: auto; display: flex; align-items: center; fill: #6c868e; }
.shop { display: flex; align-items: center; gap: 7px; white-space: nowrap; }
.shop svg { fill: #25b9d7; }
.bell { position: relative; margin: 0 21px 0 26px; }
.badge { position: absolute; left: 15px; top: -6px; width: 17px; height: 17px; border-radius: 50%; background: #f4b53c; color: #fff; font: 600 12px/17px "Open Sans", sans-serif; }
.account { margin-left: 32px; }

/* sidebar */
.workspace { flex: 1; min-height: 0; display: flex; background: #eaebec; color: #363a41; }
.sidebar { flex: none; width: 280px; overflow: hidden; background: #363a41; color: #bebebe; font-size: 16px; }
.collapse { width: 100%; height: 60px; justify-content: flex-end; padding: 0 28px 3px 0; }
.item { display: flex; align-items: center; height: 43px; padding-left: 19px; gap: 12px; }
.item svg { width: 27px; height: 27px; fill: #fff; }
.sidebar h2 { margin: 39px 0 0 20px; height: 59px; border-top: 2px solid #8fa2a7; padding-top: 18px; font: 700 15px/22px "Open Sans", sans-serif; color: #fff; }
.open { background: #202226; }
.current { color: #fff; border-left: 6px solid #25b9d7; padding: 0 13px 0 13px; }
.current svg { fill: #25b9d7; }
.current .chev { margin-left: auto; width: 12px; height: 12px; color: #6c868e; }
.sidebar ul { list-style: none; padding: 14px 0 15px 59px; }
.sidebar li { line-height: 32px; }
.on { color: #fff; }

/* product page */
.main { flex: 1; min-width: 0; display: flex; flex-direction: column; }
.content { flex: 1; min-height: 0; overflow: hidden; }
.product-head { height: 94px; padding: 0 20px 47px; background: #fff; display: flex; align-items: flex-end; }
.name { flex: 1; min-width: 0; height: 63px; padding: 0 10px; border: 2px solid #bbcdd2; background: #fff; font-size: 32px; outline: 0; }
.type { position: relative; flex: none; width: 192px; margin-left: 40px; }
.type select { appearance: none; display: block; width: 192px; height: 47px; padding: 0 36px 0 15px; border: 2px solid #bbcdd2; border-radius: 0; background: #f1f2f4; color: #9fb0b5; opacity: 1; font-size: 18px; }
.type svg { position: absolute; right: 17px; top: 15px; }
.help { flex: none; width: 22px; height: 22px; border: 3px solid #25b9d7; background: #dff5f9; color: #25b9d7; font: 700 13px/16px "Open Sans", sans-serif; }
.type + .help { margin: 0 0 7px 13px; }
.actions { flex: none; width: 416px; padding-right: 7px; display: flex; justify-content: flex-end; gap: 32px; align-items: flex-end; font-size: 16px; line-height: 24px; color: #6c868e; text-align: center; white-space: nowrap; height: 47px; }
.actions a { height: 52px; display: block; }
.actions .two { height: 64px; }
.actions svg { fill: #6c868e; margin: 0 auto; }
.tabs { height: 88px; padding: 22px 68px 0; display: flex; color: #6c868e; white-space: nowrap; }
.tabs a { padding: 21px 26px 0; line-height: 26px; }
.tabs .sel { background: #fff; border-top: 4px solid #25b9d7; color: #363a41; }
.panel { margin: 0 20px; padding: 21px 20px 0; background: #fff; display: grid; grid-template-columns: minmax(0, 1fr) 360px; gap: 40px; align-items: start; }
.combos h1 { display: flex; align-items: center; gap: 14px; margin: 24px 0 18px; font-size: 24px; line-height: 32px; }
.info { display: flex; border: 3px solid #25b9d7; white-space: nowrap; }
.info-icon { flex: none; width: 61px; background: #dff5f9; display: grid; place-items: center; }
.info p { padding: 16px 0 16px 10px; line-height: 28px; }
.info a { font-weight: 700; color: #0f3d46; }
.generate { display: flex; gap: 40px; margin-top: 21px; }
.generate input { flex: 1; height: 49px; padding: 0 12px; border: 2px solid #bbcdd2; background: #fff; }
.generate input::placeholder { color: #777; opacity: 1; }
.generate div { width: 160px; }
.generate button { width: 123px; height: 47px; border: 2px solid #25b9d7; border-radius: 1px; color: #25b9d7; font-weight: 600; }
.bulk { width: 100%; height: 47px; margin-top: 21px; padding: 0 16px 0 9px; border: 2px solid #ebf0f1; justify-content: space-between; font-weight: 700; color: #c1c3c6; }
table { width: 100%; margin-top: 25px; border-collapse: collapse; table-layout: fixed; border-bottom: 2px solid #cdd9dc; }
th { height: 47px; padding: 0; text-align: left; font-size: 13px; font-weight: 700; }
thead { border-bottom: 3px solid #25b9d7; }
.c-check { width: 135px; }
.c-check input { display: block; width: 17px; height: 17px; margin: -8px 0 0 8px; }
.c-name { width: 309px; }
.c-def { text-align: right; padding-right: 9px; }
td { height: 84px; padding: 0; }
.combos .prefs { margin: 65px 0 40px; }

.group { width: 100%; height: 50px; padding: 0 13px 0 9px; border: 2px solid #bbcdd2; justify-content: space-between; font-weight: 600; }
.opts { border: 2px solid #bbcdd2; border-width: 1px 2px 0; padding: 9px 0 0 8px; color: #bbcdd2; display: grid; grid-auto-rows: 28px; }
.opts label { display: flex; gap: 9px; line-height: 28px; white-space: nowrap; }
.opts input { appearance: none; flex: none; width: 22px; height: 22px; margin: 0; border: 2px solid #bbcdd2; background: #fff; }
.sizes { height: 214px; }
.colors { height: 215px; border-bottom-width: 2px; grid-template: repeat(5, 28px) / 1fr 1fr; column-gap: 8px; grid-auto-flow: column; }
.opts .army { background: #667c00; }
.opts .navy { background: #00007f; }
.opts .grn { background: #008000; }
.opts .rd { background: #f00; }
.opts .denim { background: #1560bd; }
.opts .raw { background: #fff5e9; }
.opts .camo { background: radial-gradient(circle at 80% 90%, #4e3325 35%, transparent 36%), radial-gradient(circle at 15% 60%, #5f8a5b 40%, transparent 41%), linear-gradient(135deg, #b9a886, #7a6a4a); }

/* bottom action bar */
.actionbar { flex: none; height: 108px; padding: 0 88px 4px 97px; display: flex; align-items: center; background: #fff; box-shadow: 0 0 14px rgba(0, 0, 0, .8); position: relative; z-index: 1; font-weight: 700; clip-path: inset(-20px 0 0 0); }
.trash { fill: #6c868e; margin: 15px 23px 0 11px; }
.preview { width: 135px; height: 47px; margin-top: 15px; border-radius: 1px; background: #6c868e; color: #fff; font-weight: 600; }
.online { display: flex; align-items: center; gap: 12px; margin: 10px 0 0 32px; font-size: 18px; }
.switch { position: relative; width: 84px; height: 48px; }
.switch input { appearance: none; width: 72px; height: 40px; margin: 4px 0; border: 3px solid #bbcdd2; border-radius: 20px; background: #25b9d7; display: block; }
.switch svg { position: absolute; right: 0; top: 0; }
.save { display: flex; gap: 2px; margin: 16px 0 0 auto; }
.save button { width: 85px; height: 47px; background: #25b9d7; color: #fff; font-weight: 600; border-radius: 1px; }
.save .drop { width: 61px; }

/* busy cursor trail */
.trail { position: absolute; z-index: 5; left: 955px; top: 813px; height: calc(100vh - 813px); overflow: hidden; }
.trail div { position: relative; width: 28px; height: 53px; }
.ptr { position: absolute; left: 0; top: 0; width: 14px; height: 22px; }
.ball { position: absolute; left: 0; top: 17px; width: 26px; height: 26px; filter: drop-shadow(0 1px 1px #7777); }
.b1 { transform: rotate(9deg); }
.b2 { transform: rotate(20deg); }
.b3 { transform: rotate(33deg); }
.b4 { transform: rotate(45deg); }
.b5 { transform: rotate(60deg); }
.b6 { transform: rotate(75deg); }
```
